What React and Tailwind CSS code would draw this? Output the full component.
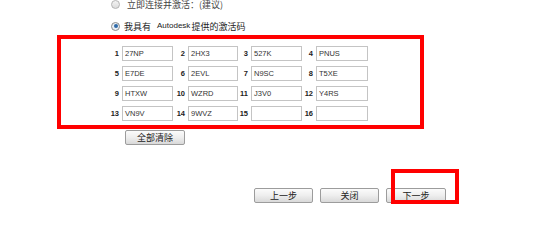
import React from "react";

const rows = [
  [["1", "27NP"], ["2", "2HX3"], ["3", "527K"], ["4", "PNUS"]],
  [["5", "E7DE"], ["6", "2EVL"], ["7", "N9SC"], ["8", "T5XE"]],
  [["9", "HTXW"], ["10", "WZRD"], ["11", "J3V0"], ["12", "Y4RS"]],
  [["13", "VN9V"], ["14", "9WVZ"], ["15", ""], ["16", ""]],
];

const cjk = { fontFamily: '"Noto Sans CJK SC", "Liberation Sans", sans-serif' };
const lat = { fontFamily: '"Liberation Sans", Arial, sans-serif' };

function Btn({ children, w = "w-[59px]" }) {
  return (
    <div
      className={`${w} h-[15px] flex items-center justify-center rounded-[2px] border border-[#9c9c9c] bg-gradient-to-b from-[#fbfbfb] via-[#eeeeee] to-[#d9d9d9] text-[9px] leading-none text-[#222]`}
      style={cjk}
    >
      {children}
    </div>
  );
}

export default function App() {
  return (
    <div className="relative w-[548px] h-[247px] bg-white overflow-hidden text-[#333]">
      <div className="-mt-[5px] flex flex-col gap-[4px]">
        <div className="h-[18px] flex items-center pl-[111px]">
          <div className="w-[9px] h-[9px] rounded-full border border-[#b4b4b4] bg-gradient-to-b from-[#f4f4f4] to-[#dcdcdc]" />
          <span className="ml-[7px] text-[9px] leading-none text-[#444]" style={cjk}>
            立即连接并激活：(建议)
          </span>
        </div>
        <div className="h-[18px] flex items-center pl-[111px]">
          <div className="w-[9px] h-[9px] rounded-full border border-[#8c8c8c] bg-[#e8eef4] flex items-center justify-center">
            <div className="w-[4px] h-[4px] rounded-full bg-[#2f6aa8]" />
          </div>
          <span className="ml-[4px] text-[9px] leading-none text-[#222]" style={cjk}>
            我具有
          </span>
          <span className="ml-[6px] text-[8px] leading-none text-[#222]" style={lat}>
            Autodesk
          </span>
          <span className="ml-[1px] text-[9px] leading-none text-[#222]" style={cjk}>
            提供的激活码
          </span>
        </div>
      </div>

      <div className="ml-[57px] w-[367px] h-[94px] border-4 border-[#ff0000] pl-[38px] pt-[7px]">
        <div className="grid grid-cols-[23px_51px_15px_50px_13px_51px_14px_52px] gap-y-[5px]">
          {rows.map((row) =>
            row.map(([n, v]) => (
              <React.Fragment key={n}>
                <div
                  className="h-[15px] flex items-center justify-end pr-[3px] text-[7.5px] font-bold leading-none text-[#222]"
                  style={lat}
                >
                  {n}
                </div>
                <div
                  className="h-[15px] flex items-center pl-[2px] border border-[#c4c4c4] bg-white text-[7.5px] leading-none text-[#333]"
                  style={lat}
                >
                  {v}
                </div>
              </React.Fragment>
            ))
          )}
        </div>
      </div>

      <div className="ml-[125px] mt-[1px]">
        <Btn w="w-[60px]">全部清除</Btn>
      </div>

      <div className="ml-[254px] mt-[43px] flex gap-[7px]">
        <Btn>上一步</Btn>
        <Btn>关闭</Btn>
        <Btn w="w-[60px]">下一步</Btn>
      </div>

      <div className="absolute left-[391px] top-[169px] w-[68px] h-[35px] border-4 border-[#ff0000]" />
    </div>
  );
}
